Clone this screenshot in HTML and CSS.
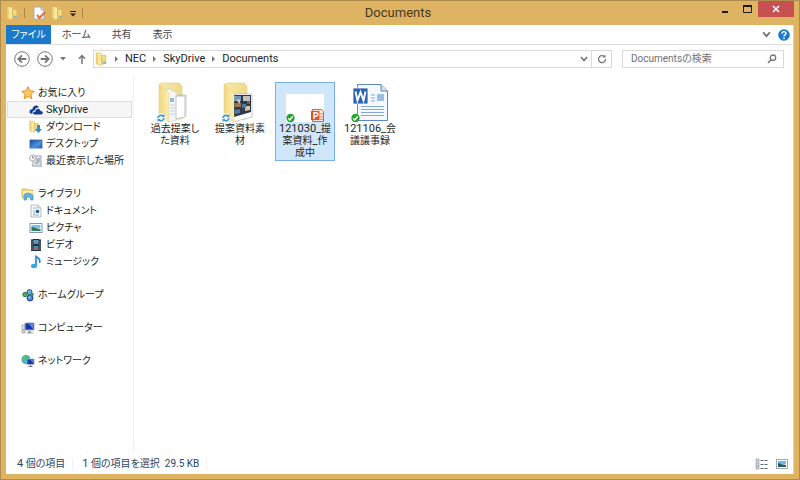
FILE: index.html
```html
<!DOCTYPE html>
<html lang="ja">
<head>
<meta charset="utf-8">
<title>Documents</title>
<link rel="stylesheet" href="styles.css">
</head>
<body>
<svg class="defs" aria-hidden="true">
  <defs>
    <linearGradient id="fold" x1="0" x2="1"><stop offset="0" stop-color="#e9ca63"/><stop offset="1" stop-color="#fbeeb0"/></linearGradient>
    <linearGradient id="flap" x1="0" x2="1"><stop offset="0" stop-color="#efd67c"/><stop offset="1" stop-color="#fbefb9"/></linearGradient>
    <linearGradient id="blue" x1="0" y1="0" x2="1" y2="1"><stop offset="0" stop-color="#1c4fa0"/><stop offset=".6" stop-color="#4f8fe0"/><stop offset="1" stop-color="#2456a8"/></linearGradient>
    <linearGradient id="back" x1="0" x2="1"><stop offset="0" stop-color="#f8e9a6"/><stop offset="1" stop-color="#efd98c"/></linearGradient>
    <symbol id="folder" viewBox="0 0 14 16">
      <path d="M1 1h5l1 1v13H3l-2-2z" fill="#f9e9a0" stroke="#dcb94e" stroke-width=".7"/>
      <path d="M7 4h5v9l-4 1z" fill="#f3dc84" stroke="#d5b24a" stroke-width=".7"/>
      <path d="M1 1l4 3v11l-4-2z" fill="url(#fold)"/>
      <path d="M9 11h3v2l-3 1z" fill="#7fb4d8"/>
    </symbol>
    <symbol id="chevron" viewBox="0 0 8 8"><path d="M1 2l3 3.5L7 2" fill="none" stroke="#777" stroke-width="1.7"/></symbol>
    <symbol id="sync" viewBox="0 0 10 10">
      <circle cx="5" cy="5" r="4.8" fill="#eef6fb"/>
      <path d="M2 5a3 3 0 0 1 5-2M8 5a3 3 0 0 1-5 2" fill="none" stroke="#3c96c9" stroke-width="1.5"/>
      <path d="M8.5 1v3h-3zM1.500 9V6h3z" fill="#3c96c9"/>
    </symbol>
    <symbol id="ok" viewBox="0 0 10 10"><circle cx="5" cy="5" r="4.600" fill="#22a32b"/><path d="M2.500 5.200l1.800 1.900 3.200-4" fill="none" stroke="#fff" stroke-width="1.500"/></symbol>
  </defs>
</svg>
<div class="window">
  <header class="titlebar">
    <div class="quick">
      <svg width="13" height="14"><use href="#folder"/></svg>
      <span class="bar"></span>
      <button class="plain" aria-label="プロパティ"><svg width="13" height="14" viewBox="0 0 13 14"><path d="M1 1h7l3 3v9H1z" fill="#fdfdfd" stroke="#a9aeb8"/><path d="M8 1v3h3" fill="#ddd" stroke="#a9aeb8"/><path d="M4 9l2.500 3L12 6" fill="none" stroke="#e8694a" stroke-width="2"/></svg></button>
      <button class="plain" aria-label="新しいフォルダー"><svg width="13" height="14"><use href="#folder"/></svg></button>
      <button class="plain" aria-label="カスタマイズ"><svg width="8" height="8" viewBox="0 0 8 8"><path d="M1 2.500h6" stroke="#222"/><path d="M1 4.500h6L4 7.500z" fill="#222"/></svg></button>
      <span class="bar"></span>
    </div>
    <h1>Documents</h1>
    <div class="controls">
      <button aria-label="最小化"><svg width="8" height="10" viewBox="0 0 8 10"><path d="M1 8h6" stroke="#1d1a14" stroke-width="2"/></svg></button>
      <button aria-label="最大化"><svg width="9" height="8" viewBox="0 0 9 8"><path d="M.5 1v6.500h8V1" fill="none" stroke="#1d1a14"/><path d="M0 1h9" stroke="#1d1a14" stroke-width="2"/></svg></button>
      <button class="close" aria-label="閉じる"><svg width="8" height="8" viewBox="0 0 8 8"><path d="M1 1l6 6M7 1L1 7" stroke="#fff" stroke-width="1.600"/></svg></button>
    </div>
  </header>
  <div class="client">
    <nav class="tabs" aria-label="リボン">
      <button class="file">ファイル</button>
      <button>ホーム</button>
      <button>共有</button>
      <button>表示</button>
      <span class="spacer"></span>
      <button class="plain" aria-label="リボンの展開"><svg width="9" height="9"><use href="#chevron"/></svg></button>
      <button class="plain" aria-label="ヘルプ"><svg width="12" height="12" viewBox="0 0 12 12"><circle cx="6" cy="6" r="5.800" fill="#1979ca"/><path d="M4 4.700C4 2 8 2 8 4.500 8 6 6 5.800 6 7.500" fill="none" stroke="#fff" stroke-width="1.400"/><circle cx="6" cy="9.300" r=".9" fill="#fff"/></svg></button>
    </nav>
    <div class="toolbar">
      <div class="history">
        <button class="plain" aria-label="戻る"><svg width="16" height="16" viewBox="0 0 16 16"><circle cx="8" cy="8" r="7.300" fill="none" stroke="#777"/><path d="M12.300 8H4.500M8 4.300L4.300 8 8 11.700" fill="none" stroke="#777" stroke-width="1.800"/></svg></button>
        <button class="plain" aria-label="進む"><svg width="16" height="16" viewBox="0 0 16 16"><circle cx="8" cy="8" r="7.300" fill="none" stroke="#777"/><path d="M3.700 8h7.800M8 4.300L11.700 8 8 11.700" fill="none" stroke="#777" stroke-width="1.800"/></svg></button>
        <button class="plain" aria-label="履歴"><svg width="6" height="4" viewBox="0 0 6 4"><path d="M0 0h6L3 3.500z" fill="#777"/></svg></button>
        <button class="plain up" aria-label="上へ"><svg width="8" height="10" viewBox="0 0 8 10"><path d="M4 10V2M1 4.700L4 1.500l3 3.200" fill="none" stroke="#777" stroke-width="1.500"/></svg></button>
      </div>
      <div class="address">
        <svg width="13" height="14"><use href="#folder"/></svg>
        <i class="sep"></i><a href="#">NEC</a>
        <i class="sep"></i><a href="#">SkyDrive</a>
        <i class="sep"></i><a href="#">Documents</a>
        <span class="spacer"></span>
        <button class="plain drop" aria-label="以前の場所"><svg width="8" height="8"><use href="#chevron"/></svg></button>
        <button class="plain refresh" aria-label="更新"><svg width="10" height="10" viewBox="0 0 10 10"><path d="M7.300 2.500A3.500 3.500 0 1 0 8.500 5" fill="none" stroke="#777" stroke-width="1.300"/><path d="M5.500 3.500h3V.5z" fill="#777"/></svg></button>
      </div>
      <label class="search">
        <input type="text" placeholder="Documentsの検索" aria-label="Documentsの検索">
        <svg width="10" height="10" viewBox="0 0 10 10"><circle cx="6" cy="3.700" r="2.700" fill="none" stroke="#777" stroke-width="1.300"/><path d="M4 5.700L1 9" stroke="#777" stroke-width="1.500"/></svg>
      </label>
    </div>
    <div class="body">
      <nav class="tree" aria-label="ナビゲーション">
        <ul>
          <li><a href="#"><svg width="14" height="14" viewBox="0 0 14 14"><path d="M7 .8l1.800 4.100 4.500.4-3.400 3 1 4.400L7 10.400l-3.900 2.300 1-4.400-3.400-3 4.500-.4z" fill="#ffc95c" stroke="#ee8a24"/></svg>お気に入り</a>
            <ul>
              <li class="current"><a href="#"><svg width="14" height="14" viewBox="0 0 14 14"><path d="M1 10.500C-.5 7 2 5.800 3.400 6.200 4 2 8.500 1.500 9.800 4.500 7 4.500 6 6 5.800 7.500 3.600 7.500 3.300 9 3.700 10.500z" fill="#123f96"/><path d="M5.500 11.500C3.500 11 4 8.500 6.500 8.500 6.800 5 11 5 11.500 8c3 0 3 3.500.5 3.500z" fill="#123f96"/></svg><span class="latin">SkyDrive</span></a></li>
              <li><a href="#"><svg width="14" height="14" viewBox="0 0 14 14"><use href="#folder" width="11" height="13"/><path d="M8 5h3v4h2l-3.500 4L6 9h2z" fill="#2c8dd3"/></svg>ダウンロード</a></li>
              <li><a href="#"><svg width="14" height="14" viewBox="0 0 14 14"><rect x="1" y="3" width="12" height="8.500" fill="url(#blue)" stroke="#315080" stroke-width=".7"/><path d="M1 11.500h12" stroke="#8ec1ee"/></svg>デスクトップ</a></li>
              <li><a href="#"><svg width="14" height="14" viewBox="0 0 14 14"><path d="M4 2h8v10H3l1-2z" fill="#e4e8ed" stroke="#8c949c" stroke-width=".8"/><path d="M7 5h4M7 7h4M6 9h4" stroke="#778899"/><circle cx="3.500" cy="4" r="3" fill="#f2f4f6" stroke="#9299a0" stroke-width=".7"/><path d="M3.500 2v2h1.500" fill="none" stroke="#667" stroke-width=".7"/><path d="M5 12l8 1V9l-2 2z" fill="#a9c9dc"/></svg>最近表示した場所</a></li>
            </ul>
          </li>
          <li><a href="#"><svg width="14" height="14" viewBox="0 0 14 14"><path d="M1 2h5l1 1h5v8H1z" fill="#f5d676" stroke="#cfaa4c" stroke-width=".7"/><path d="M2 4h10v3H2z" fill="#fff1b6"/><path d="M3 13V9q0-3 4-3t5 3v4h-2.500v-3q-2.500-1-4 0v3z" fill="#62b6e3" stroke="#408fbf" stroke-width=".6"/></svg>ライブラリ</a>
            <ul>
              <li><a href="#"><svg width="14" height="14" viewBox="0 0 14 14"><path d="M2 1h7l3 3v9H2z" fill="#f9fbfd" stroke="#9ea9b5" stroke-width=".8"/><path d="M9 1v3h3" fill="#dce5ee" stroke="#9ea9b5" stroke-width=".7"/><path d="M4 4h4M4 7h2M4 9h2M4 11h6" stroke="#8baaca"/><circle cx="8.500" cy="7.500" r="1.800" fill="#235b83"/></svg>ドキュメント</a></li>
              <li><a href="#"><svg width="14" height="14" viewBox="0 0 14 14"><rect x="1" y="2.500" width="12" height="9" fill="#fff" stroke="#8a98a4"/><path d="M2.500 4h9v3h-9z" fill="#6fc3ef"/><path d="M2.500 6l4 1 5 1v2h-9z" fill="#256b53"/><path d="M3 9h8" stroke="#3989ad"/></svg>ピクチャ</a></li>
              <li><a href="#"><svg width="14" height="14" viewBox="0 0 14 14"><rect x="2" y="1" width="10" height="12" fill="#20313f"/><path d="M4.500 2h5v4h-5z" fill="#4ca5dc"/><path d="M4.500 8h5v4h-5z" fill="#4386b6"/><path d="M5 5.500l2-2 2 2zM5 11l2-2 2 2z" fill="#b56439"/><path d="M3 1v12M11 1v12" stroke="#d3dce2" stroke-dasharray="1 1.400"/></svg>ビデオ</a></li>
              <li><a href="#"><svg width="14" height="14" viewBox="0 0 14 14"><path d="M7 11V1.500Q12 4 10.500 8" fill="none" stroke="#2389d0" stroke-width="1.700"/><ellipse cx="5" cy="11" rx="3" ry="2.200" fill="#3ea5e4"/></svg>ミュージック</a></li>
            </ul>
          </li>
          <li><a href="#"><svg width="14" height="14" viewBox="0 0 14 14"><circle cx="8.500" cy="4" r="2.500" fill="#6eb5df" stroke="#255a9d"/><circle cx="4" cy="6.500" r="2.200" fill="#55a66b" stroke="#247a4c"/><circle cx="9" cy="10" r="3" fill="#4c82d0" stroke="#263f91"/><circle cx="11" cy="6.500" r="1.800" fill="#38975a"/><circle cx="8.500" cy="9.500" r="1" fill="#b4dcf7"/></svg>ホームグループ</a></li>
          <li><a href="#"><svg width="14" height="14" viewBox="0 0 14 14"><path d="M1 4h3v8H1z" fill="#e1e2e3" stroke="#888e94" stroke-width=".7"/><path d="M4 2h9v7H4z" fill="#1a36ac" stroke="#a5a9ae"/><path d="M8 3h4v5z" fill="#6285e0"/><path d="M7 10h3v1.500h2v1H6z" fill="#999fa7"/><path d="M2 9h1" stroke="#2c9c44"/></svg>コンピューター</a></li>
          <li><a href="#"><svg width="14" height="14" viewBox="0 0 14 14"><circle cx="5" cy="5.500" r="4.500" fill="#2fa8d8"/><path d="M1 4q3-4 5-2L4 5l1 3-2 1zM7 2l2 2-2 1z" fill="#59c46a"/><path d="M6 5h7v5.500H6z" fill="#153aa8" stroke="#aab8cb" stroke-width=".8"/><path d="M9 5.500h3.500v4z" fill="#4f7fe0"/><path d="M9 11v1H7.500v1h4v-1H10v-1z" fill="#6d7885"/></svg>ネットワーク</a></li>
        </ul>
      </nav>
      <main class="files">
        <a class="item" href="#">
          <svg width="48" height="42" viewBox="0 0 48 42"><path d="M9 2l2-1h17l3 3v33H9z" fill="url(#back)" stroke="#e3c97c" stroke-width=".6"/><path d="M16 6l10 5v27l-9 2z" fill="#f4f6f8" stroke="#cbd1d6" stroke-width=".7"/><path d="M19 16h4v4h-4z" fill="#8cbbe0"/><path d="M19 23h5M19 26h5M19 29h5M19 32h5" stroke="#bccfdd"/><path d="M25 14h9v21l-9 2z" fill="#fff" stroke="#aaa" stroke-width=".7"/><path d="M27 13h8v21" fill="none" stroke="#b6b6b6" stroke-width=".7"/><path d="M8 2l10 9v29L8 34z" fill="url(#flap)" stroke="#e6cc7d" stroke-width=".5"/><use href="#sync" x="5" y="31" width="10" height="10"/></svg>
          <span>過去提案し<br>た資料</span>
        </a>
        <a class="item" href="#">
          <svg width="48" height="42" viewBox="0 0 48 42"><path d="M9 2l2-1h17l3 3v33H9z" fill="url(#back)" stroke="#e3c97c" stroke-width=".6"/><path d="M17 12h19v23l-19 5z" fill="#fff" stroke="#aaa" stroke-width=".6"/><path d="M18 13h17v17l-17 5z" fill="#303947"/><path d="M18 14h7v5h-7z" fill="#7198ba"/><path d="M27 14h7v5h-7z" fill="#c2c2bd"/><path d="M19 21h6v4h-6z" fill="#a4734e"/><path d="M20 18l4-1v5zM29 24h5v4l-5 1z" fill="#d8c6ab"/><path d="M26 22h4v4h-4zM19 28l5-1v4l-5 1z" fill="#4d79a1"/><path d="M31 19h3v3h-3z" fill="#8c5542"/><path d="M8 2l10 9v29L8 34z" fill="url(#flap)" stroke="#e6cc7d" stroke-width=".5"/><use href="#sync" x="5" y="31" width="10" height="10"/></svg>
          <span>提案資料素<br>材</span>
        </a>
        <a class="item selected" href="#">
          <svg width="48" height="42" viewBox="0 0 48 42"><path d="M5 12h38v28H5z" fill="#fff"/><use href="#ok" x="5" y="31" width="9" height="10"/><path d="M31.500 27.500h9l2 2v10h-11z" fill="#fbe6dc" stroke="#d9603a"/><path d="M39 32h3M39 35h3M39 37.500h3" stroke="#e08b6b"/><path d="M30 29h8.500v9H30z" fill="#d6532d"/><path d="M33 37v-6.200h1.600q2.200 0 2.200 1.700t-2.200 1.800H33" fill="none" stroke="#fff" stroke-width="1.400"/></svg>
          <span><b class="latin">121030_</b>提<br>案資料<b class="latin">_</b>作<br>成中</span>
        </a>
        <a class="item" href="#">
          <svg width="48" height="42" viewBox="0 0 48 42"><path d="M11.500 2.500H35l6.500 6.500v29.500h-30z" fill="#f5f9fd" stroke="#5f88bd"/><path d="M35 2.500V9h6.500" fill="#cfe0f2" stroke="#5f88bd"/><path d="M25 13h4M25 16h4M25 19h4M15 24.500h23M15 27.500h23M15 30.500h23M15 33.500h23" stroke="#83a9d4" stroke-width="1.200"/><path d="M31 12h7v7h-7z" fill="#9cbde0"/><path d="M7 6h15v16H7z" fill="#2b62b0" stroke="#fff" stroke-width=".8"/><path d="M9.500 9.500l2 9 3-8.500 3 8.500 2-9" fill="none" stroke="#fff" stroke-width="1.900"/><use href="#ok" x="5" y="31" width="9" height="10"/></svg>
          <span><b class="latin">121106_</b>会<br>議議事録</span>
        </a>
      </main>
    </div>
    <footer class="status">
      <span><b class="latin">4</b> 個の項目</span>
      <span><b class="latin">1</b> 個の項目を選択&nbsp; <b>29.5 KB</b></span>
      <span class="spacer"></span>
      <button class="plain" aria-label="詳細表示"><svg width="14" height="12" viewBox="0 0 14 12"><path d="M1 1h3v3H1zM1 5h3v3H1zM1 8.500h3v2.500H1z" fill="#d7dde5" stroke="#8c98a6" stroke-width=".7"/><path d="M5.500 2.500h3M9.500 2.500h3M5.500 6.500h3M9.500 6.500h3M5.500 10.500h3M9.500 10.500h3" stroke="#59657a"/></svg></button>
      <button class="plain" aria-label="大きい縮小表示"><svg width="12" height="12" viewBox="0 0 12 12"><rect x=".5" y="1.500" width="11" height="9" fill="#fff" stroke="#9faab5"/><path d="M2 3h8v3H2z" fill="#69bfee"/><path d="M2 5l3 1 5 1v2H2z" fill="#245f68"/></svg></button>
    </footer>
  </div>
</div>
</body>
</html>
```
FILE: styles.css
```css
* { box-sizing: border-box; }

body {
  margin: 0;
  font: 10px/12px Roboto, "Noto Sans CJK JP", sans-serif;
  font-feature-settings: "palt";
  color: #1e1e1e;
}

svg { display: block; flex: none; }
a { color: inherit; text-decoration: none; }
b { font-weight: normal; }
ul { margin: 0; padding: 0; list-style: none; }

button {
  display: flex;
  align-items: center;
  justify-content: center;
  margin: 0;
  padding: 0;
  border: 0;
  background: none;
  font: inherit;
  font-feature-settings: inherit;
  color: inherit;
}

.defs { position: absolute; width: 0; height: 0; }
.spacer { flex: 1; }
.latin { font-size: 11px; }

.window {
  display: flex;
  flex-direction: column;
  min-height: 100vh;
  padding: 0 5px 5px;
  background: #deb362;
  border: 1px solid #b08c4d;
}

.titlebar {
  display: grid;
  grid-template-columns: 1fr auto 1fr;
  align-items: center;
  height: 24px;
}

.titlebar h1 {
  margin: 0;
  padding-right: 4px;
  font-size: 13px;
  font-weight: normal;
  line-height: 16px;
  color: #46391f;
}

.quick { display: flex; align-items: center; gap: 5px; }
.bar { width: 1px; height: 10px; background: #a88748; }
.quick .bar:first-of-type { margin-right: 3px; }

.controls {
  display: flex;
  align-self: start;
  justify-content: flex-end;
  height: 16px;
}

.controls button { width: 22px; }
.controls .close { width: 36px; background: #c75050; }

.client {
  display: flex;
  flex: 1;
  flex-direction: column;
  background: #fff;
  border-right: 1px solid #e8d3aa;
}

.tabs {
  display: flex;
  height: 20px;
  border-bottom: 1px solid #dedfe0;
  color: #444;
}

.tabs button { padding: 0 10px; }
.tabs button + button { margin-left: 1px; }
.tabs .file { width: 45px; padding: 0; background: #1979ca; color: #fff; }
.tabs .plain { padding: 0 3px; }

.toolbar {
  display: flex;
  align-items: center;
  gap: 10px;
  height: 31px;
  padding: 0 9px 4px 8px;
}

.history { display: flex; align-items: center; gap: 7px; }
.history .up { margin-left: 5px; }

.address, .search {
  display: flex;
  align-items: center;
  height: 18px;
  border: 1px solid #d9d9d9;
}

.address { flex: 1; margin-left: -3px; padding-left: 1px; font-size: 11px; }

.sep {
  margin: 0 7px;
  border: 3px solid transparent;
  border-right: 0;
  border-left-color: #777;
}

.drop { width: 15px; }
.refresh { width: 20px; height: 16px; border-left: 1px solid #d9d9d9; }

.search { width: 162px; padding: 0 6px 0 8px; }

.search input {
  flex: 1;
  min-width: 0;
  padding: 0;
  border: 0;
  outline: 0;
  background: none;
  font: inherit;
  font-feature-settings: inherit;
}

.search input::placeholder { color: #707070; opacity: 1; }

.body { display: flex; flex: 1; }

.tree {
  width: 128px;
  padding: 8px 1px 0;
  border-right: 1px solid #f2f2f2;
}

.tree > ul { display: grid; gap: 16px; }
.tree a { display: flex; align-items: center; gap: 3px; height: 17px; padding-left: 14px; }
.tree ul ul a { padding-left: 22px; }
.tree .current { background: #f6f6f6; outline: 1px solid #dedede; outline-offset: -1px; }

.files { display: flex; flex: 1; align-items: flex-start; gap: 5px; padding: 6px 11px; }

.item {
  width: 60px;
  height: 79px;
  border: 1px solid transparent;
  text-align: center;
}

.item svg { margin: -1px auto 0 5px; }
.item span { display: block; margin-top: -1px; }
.item.selected { background: #cfe6fb; border-color: #7aafe3; }

.status {
  display: flex;
  align-items: center;
  gap: 7px;
  height: 20px;
  padding: 0 5px 0 11px;
  color: #2b4565;
}

.status span + span:not(.spacer) { padding: 0 7px 0 9px; border-left: 1px solid #f0f0f0; border-right: 1px solid #f0f0f0; }
```
